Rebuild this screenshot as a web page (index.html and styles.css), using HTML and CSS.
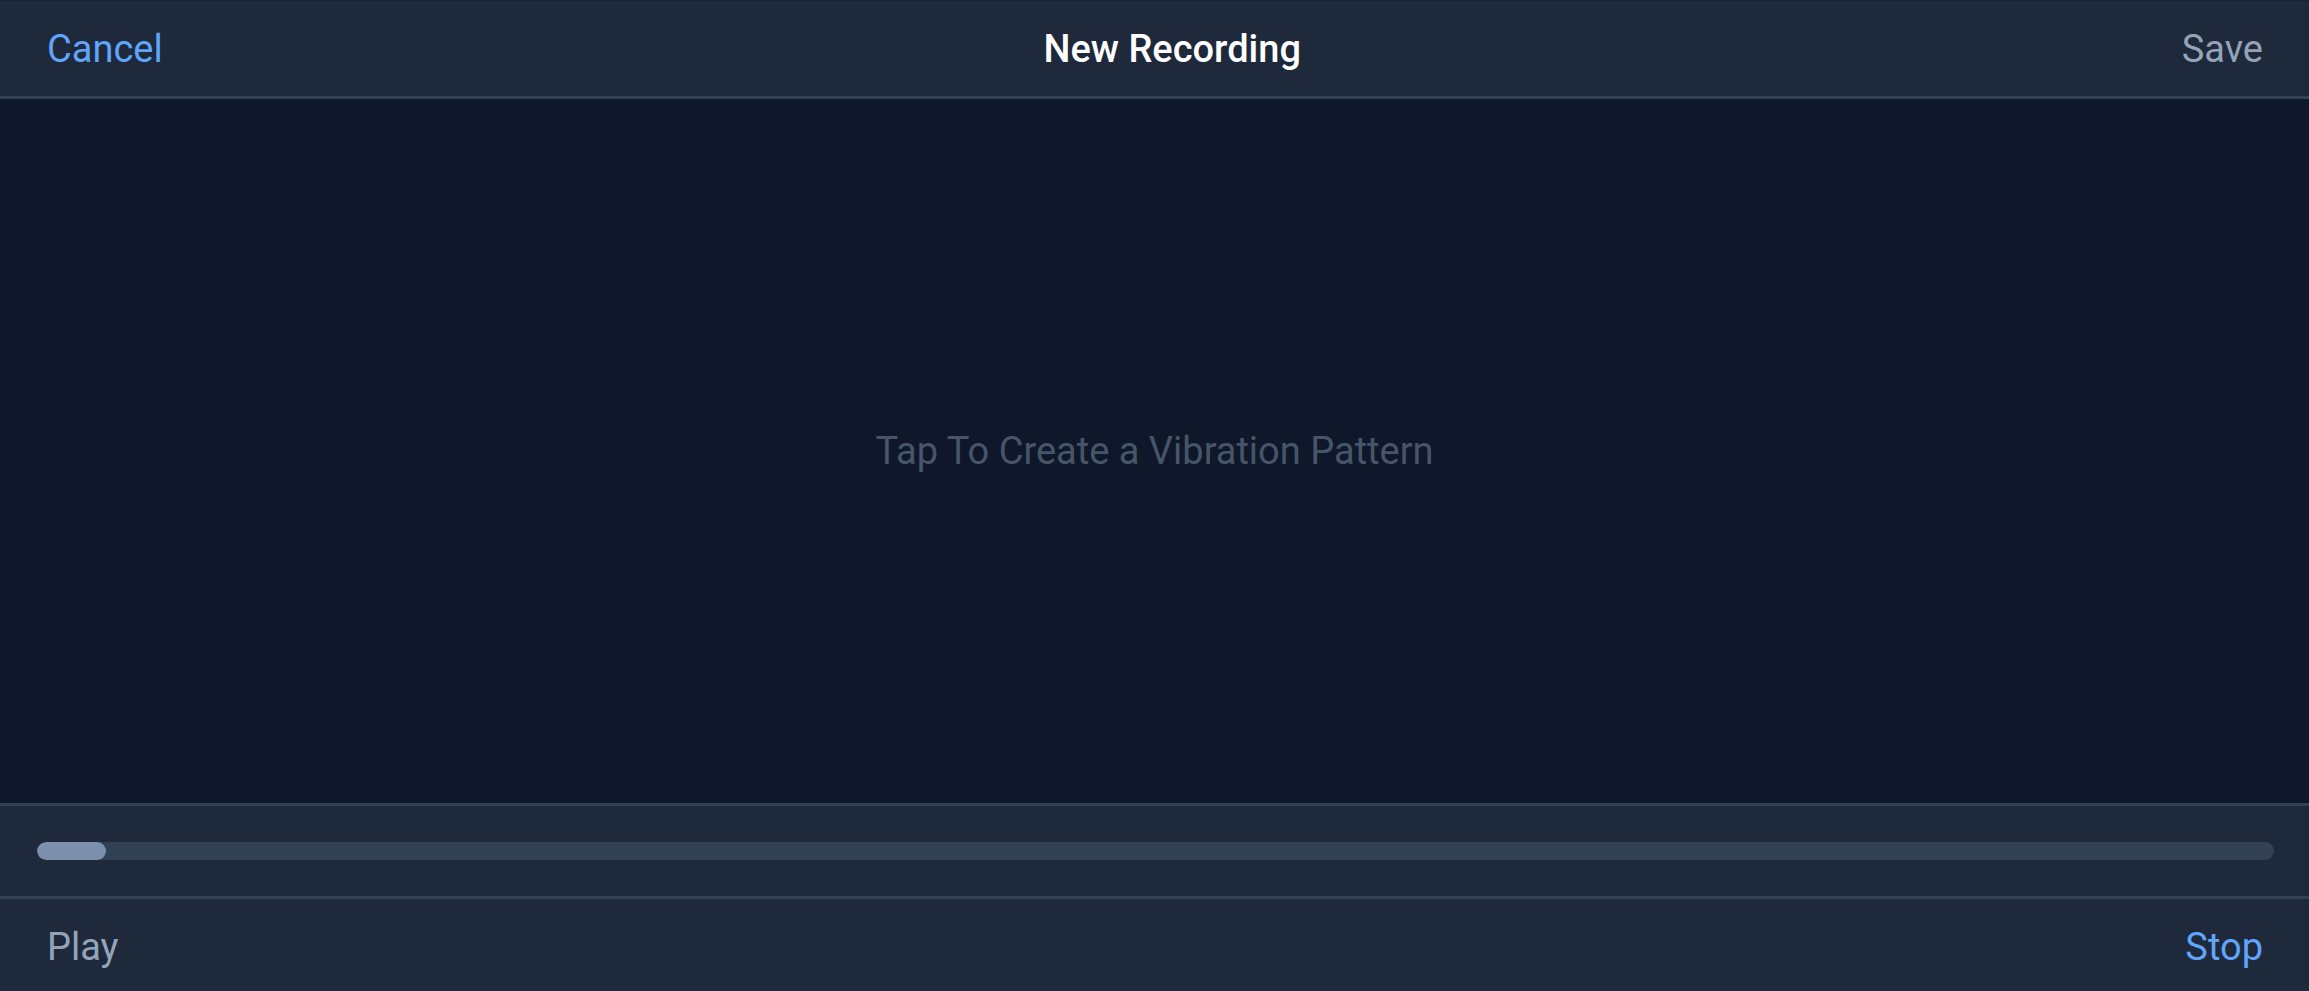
FILE: index.html
```html
<!DOCTYPE html>
<html lang="en">
<head>
<meta charset="utf-8">
<title>New Recording</title>
<link rel="stylesheet" href="styles.css">
</head>
<body>
<div class="app">
  <header class="topbar">
    <span class="btn btn-primary">Cancel</span>
    <span class="title">New Recording</span>
    <span class="btn btn-muted">Save</span>
  </header>
  <main class="canvas">
    <p class="hint">Tap To Create a Vibration Pattern</p>
  </main>
  <section class="progress">
    <div class="track"><div class="fill" style="width:3.1%"></div></div>
  </section>
  <footer class="bottombar">
    <span class="btn btn-muted">Play</span>
    <span class="btn btn-primary">Stop</span>
  </footer>
</div>
</body>
</html>
```
FILE: styles.css
```css
* { box-sizing: border-box; }
html, body {
  margin: 0;
  padding: 0;
  background: #0f172a;
  overflow: hidden;
}
body {
  font-family: Roboto, "Liberation Sans", sans-serif;
  font-size: 38px;
}
.app {
  display: flex;
  flex-direction: column;
  width: 100%;
}
.topbar {
  height: 99px;
  background: #1e293b;
  border-top: 1px solid #182132;
  border-bottom: 3px solid #334155;
  display: flex;
  align-items: center;
  justify-content: space-between;
  padding: 0 46px 0 47px;
}
.btn { line-height: 1; }
.btn-primary { color: #60a5fa; }
.btn-muted { color: #94a3b8; }
.title {
  color: #ffffff;
  font-weight: 500;
  line-height: 1;
}
.canvas {
  height: 704px;
  background: #0f172a;
  display: flex;
  align-items: center;
  justify-content: center;
}
.hint {
  margin: 0;
  color: #475569;
  line-height: 1;
}
.progress {
  background: #1e293b;
  border-top: 3px solid #334155;
  border-bottom: 3px solid #334155;
  padding: 36px 35px 36px 37px;
}
.track {
  height: 18px;
  border-radius: 9px;
  background: #334155;
  overflow: hidden;
}
.fill {
  height: 100%;
  border-radius: 9px;
  background: #7d91ad;
}
.bottombar {
  height: 96px;
  background: #1e293b;
  display: flex;
  align-items: center;
  justify-content: space-between;
  padding: 0 46px 0 47px;
}
```
